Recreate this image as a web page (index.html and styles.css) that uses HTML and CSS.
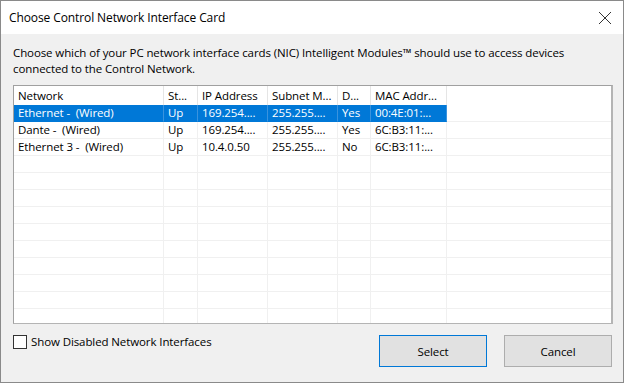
FILE: index.html
```html
<!DOCTYPE html>
<html>
<head>
    <title>Choose Control Network Interface Card</title>
    <link rel="stylesheet" href="styles.css">
</head>
<body>
<div class="window">
    <div class="titlebar">
        <span class="title">Choose Control Network Interface Card</span>
        <svg class="close" width="14" height="14" viewBox="0 0 14 14">
            <path d="M1 1 L13 13 M13 1 L1 13" stroke="#333" stroke-width="1" fill="none"/>
        </svg>
    </div>
    <div class="content">
        <p class="desc">Choose which of your PC network interface cards (NIC) Intelligent Modules™ should use to access devices<br>connected to the Control Network.</p>

        <div class="list">
            <div class="row head">
                <div class="cell">Network</div>
                <div class="cell">St...</div>
                <div class="cell">IP Address</div>
                <div class="cell">Subnet M...</div>
                <div class="cell">D...</div>
                <div class="cell">MAC Addr...</div>
                <div class="cell filler"></div>
            </div>
            <div class="row selected">
                <div class="cell">Ethernet -&nbsp; (Wired)</div>
                <div class="cell">Up</div>
                <div class="cell">169.254....</div>
                <div class="cell">255.255....</div>
                <div class="cell">Yes</div>
                <div class="cell">00:4E:01:...</div>
                <div class="cell filler"></div>
            </div>
            <div class="row">
                <div class="cell">Dante -&nbsp; (Wired)</div>
                <div class="cell">Up</div>
                <div class="cell">169.254....</div>
                <div class="cell">255.255....</div>
                <div class="cell">Yes</div>
                <div class="cell">6C:B3:11:...</div>
                <div class="cell filler"></div>
            </div>
            <div class="row">
                <div class="cell">Ethernet 3 -&nbsp; (Wired)</div>
                <div class="cell">Up</div>
                <div class="cell">10.4.0.50</div>
                <div class="cell">255.255....</div>
                <div class="cell">No</div>
                <div class="cell">6C:B3:11:...</div>
                <div class="cell filler"></div>
            </div>
            <div class="row empty"><div class="cell"></div><div class="cell"></div><div class="cell"></div><div class="cell"></div><div class="cell"></div><div class="cell"></div><div class="cell filler"></div></div>
            <div class="row empty"><div class="cell"></div><div class="cell"></div><div class="cell"></div><div class="cell"></div><div class="cell"></div><div class="cell"></div><div class="cell filler"></div></div>
            <div class="row empty"><div class="cell"></div><div class="cell"></div><div class="cell"></div><div class="cell"></div><div class="cell"></div><div class="cell"></div><div class="cell filler"></div></div>
            <div class="row empty"><div class="cell"></div><div class="cell"></div><div class="cell"></div><div class="cell"></div><div class="cell"></div><div class="cell"></div><div class="cell filler"></div></div>
            <div class="row empty"><div class="cell"></div><div class="cell"></div><div class="cell"></div><div class="cell"></div><div class="cell"></div><div class="cell"></div><div class="cell filler"></div></div>
            <div class="row empty"><div class="cell"></div><div class="cell"></div><div class="cell"></div><div class="cell"></div><div class="cell"></div><div class="cell"></div><div class="cell filler"></div></div>
            <div class="row empty"><div class="cell"></div><div class="cell"></div><div class="cell"></div><div class="cell"></div><div class="cell"></div><div class="cell"></div><div class="cell filler"></div></div>
            <div class="row empty"><div class="cell"></div><div class="cell"></div><div class="cell"></div><div class="cell"></div><div class="cell"></div><div class="cell"></div><div class="cell filler"></div></div>
            <div class="row empty"><div class="cell"></div><div class="cell"></div><div class="cell"></div><div class="cell"></div><div class="cell"></div><div class="cell"></div><div class="cell filler"></div></div>
            <div class="row empty"><div class="cell"></div><div class="cell"></div><div class="cell"></div><div class="cell"></div><div class="cell"></div><div class="cell"></div><div class="cell filler"></div></div>
        </div>

        <div class="footer">
            <label class="check">
                <span class="box"></span>
                Show Disabled Network Interfaces
            </label>
            <div class="buttons">
                <button class="btn default">Select</button>
                <button class="btn">Cancel</button>
            </div>
        </div>
    </div>
</div>
</body>
</html>
```

FILE: styles.css
```css
html, body {
    margin: 0;
    padding: 0;
}
body {
    font-family: "Open Sans", "Noto Sans", Arial, sans-serif;
    font-size: 11.5px;
    letter-spacing: -0.1px;
    color: #000;
    background: #fff;
}
.window {
    width: 624px;
    height: 383px;
    box-sizing: border-box;
    border: 1px solid #8a8a8a;
    display: flex;
    flex-direction: column;
    background: #f0f0f0;
}
.titlebar {
    height: 33px;
    background: #fff;
    display: flex;
    align-items: center;
    justify-content: space-between;
    padding: 0 11px 0 8px;
    flex-shrink: 0;
}
.title {
    font-size: 12px;
    color: #000;
}
.close {
    display: block;
    margin-top: 1px;
}
.content {
    flex: 1;
    padding: 0 11px 0 12px;
    display: flex;
    flex-direction: column;
}
.desc {
    margin: 11px 0 0;
    line-height: 16px;
}
.list {
    margin-top: 8px;
    width: 600px;
    height: 239px;
    box-sizing: border-box;
    border: 1px solid #a0a0a0;
    border-right: 2px solid #b4b4b4;
    border-bottom-color: #b4b4b4;
    background: #fff;
    overflow: hidden;
}
.row {
    display: grid;
    grid-template-columns: 150px 34px 70px 70px 33px 76px 1fr;
    height: 17px;
    line-height: 16px;
}
.row .cell {
    box-sizing: border-box;
    border-right: 1px solid #f0f0f0;
    border-bottom: 1px solid #f0f0f0;
    padding-left: 4px;
    white-space: nowrap;
    overflow: hidden;
}
.row .filler {
    border-right: none;
}
.row.head {
    height: 19px;
    line-height: 20px;
}
.row.head .cell {
    border-bottom: none;
    border-right-color: #e5e5e5;
}
.row.head .filler {
    border-right: none;
}
.row.selected .cell {
    background: #0078d7;
    color: #fff;
    border-right-color: #3a93de;
    border-bottom-color: #0078d7;
}
.row.selected .filler {
    background: #fff;
    border-bottom-color: #f0f0f0;
}
.footer {
    display: flex;
    justify-content: space-between;
    align-items: flex-start;
    margin-top: 11px;
}
.check {
    display: flex;
    align-items: center;
    gap: 4px;
    margin-top: -1px;
}
.check .box {
    width: 14px;
    height: 14px;
    box-sizing: border-box;
    border: 1px solid #333;
    background: #fff;
}
.buttons {
    display: flex;
    gap: 17px;
}
.btn {
    width: 108px;
    height: 32px;
    background: #e1e1e1;
    border: 1px solid #adadad;
    font-family: inherit;
    font-size: 11.5px;
    letter-spacing: -0.1px;
    color: #000;
    padding: 0;
}
.btn.default {
    border-color: #0078d7;
}
```
